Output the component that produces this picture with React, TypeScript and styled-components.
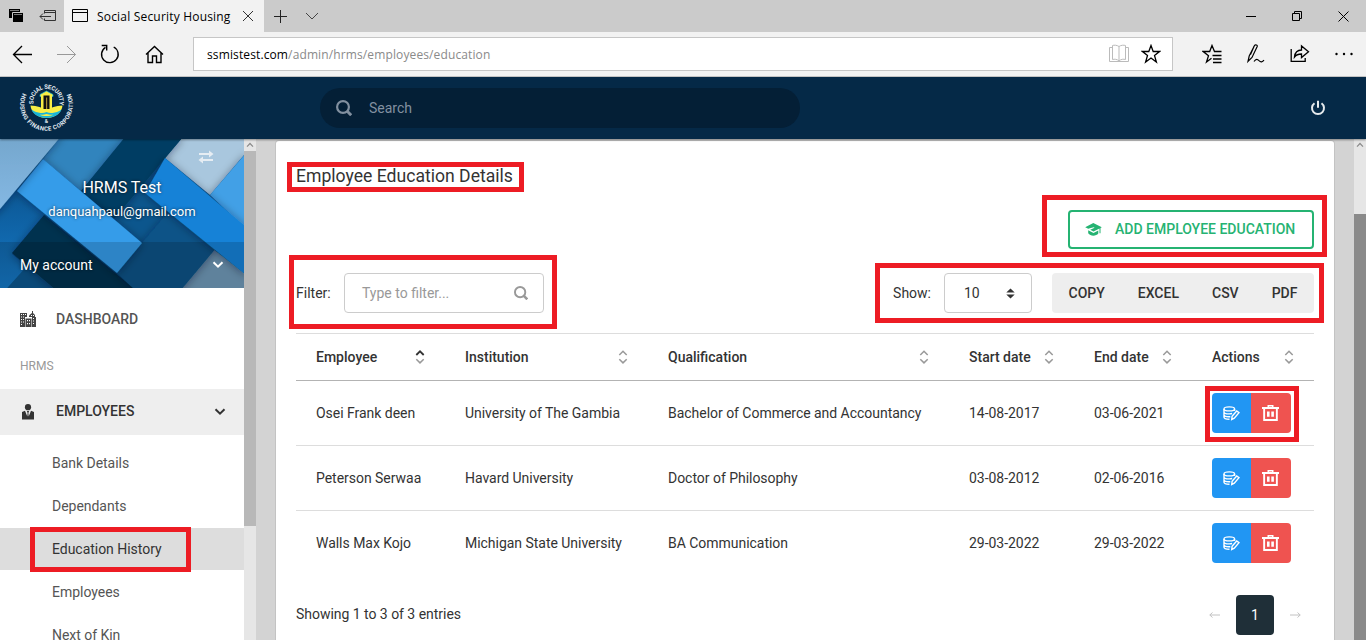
import React from 'react';
import styled, { createGlobalStyle, css } from 'styled-components';

const GlobalStyle = createGlobalStyle`
  *, *::before, *::after { box-sizing: border-box; }
  html, body { margin: 0; padding: 0; overflow: hidden; }
  body { font-family: Roboto, "Liberation Sans", sans-serif; font-size: 14px; color: #333; }
  button, input { font-family: inherit; }
  svg { display: block; flex: none; }
`;

const Window = styled.div`
  position: relative;
  width: 1366px;
  height: 640px;
  overflow: hidden;
  display: flex;
  flex-direction: column;
  background: #d3d3d3;
`;

/* ---------- Browser chrome ---------- */

const TitleBar = styled.div`
  display: flex;
  flex: none;
  height: 32px;
  background: #cbcbcb;
  color: #000;
  font-family: "Open Sans", "Noto Sans", sans-serif;
`;

const TabTools = styled.div`
  display: flex;
  align-items: center;
  gap: 15px;
  width: 64px;
  padding-left: 8px;
`;

const BrowserTab = styled.div`
  display: flex;
  align-items: center;
  width: 200px;
  padding: 0 10px 0 8px;
  background: #f2f2f2;
`;

const TabTitle = styled.span`
  flex: 1;
  margin-left: 9px;
  font-size: 12px;
  letter-spacing: 0.19px;
  white-space: nowrap;
`;

const NewTab = styled.div`
  display: flex;
  align-items: center;
  gap: 18px;
  padding-left: 10px;
`;

const WindowButtons = styled.div`
  display: flex;
  align-items: center;
  gap: 36px;
  margin-left: auto;
  padding-right: 17px;
`;

const Toolbar = styled.div`
  display: flex;
  flex: none;
  align-items: center;
  height: 45px;
  padding: 0 12px 0 12px;
  background: #f2f2f2;
  border-bottom: 1px solid #c9c9c9;
`;

const NavButtons = styled.div`
  display: flex;
  gap: 24px;
  width: 181px;
`;

const AddressBar = styled.div`
  display: flex;
  align-items: center;
  width: 980px;
  height: 34px;
  padding: 0 11px 0 13px;
  background: #fff;
  border: 1px solid #c6c6c6;
  font-family: "Open Sans", "Noto Sans", sans-serif;
  font-size: 12px;
  letter-spacing: 0.12px;
  color: #8a8a8a;
`;

const Host = styled.span`
  color: #000;
`;

const AddressTools = styled.div`
  display: flex;
  gap: 12px;
  margin-left: auto;
`;

const BrowserActions = styled.div`
  display: flex;
  gap: 24px;
  margin-left: auto;
`;

/* ---------- Application header ---------- */

const Header = styled.header`
  position: relative;
  z-index: 1;
  display: flex;
  flex: none;
  align-items: center;
  height: 62px;
  padding: 0 40px 0 19px;
  background: #052947;
  box-shadow: 0 1px 2px rgba(0, 0, 0, 0.4);
`;

const LogoSlot = styled.div`
  width: 301px;
`;

const SearchPill = styled.div`
  display: flex;
  align-items: center;
  gap: 17px;
  width: 480px;
  height: 40px;
  padding-left: 16px;
  border-radius: 20px;
  background: #041f36;
  color: #8290a0;
`;

const PowerSlot = styled.div`
  margin-left: auto;
`;

/* ---------- Body ---------- */

const Body = styled.div`
  display: flex;
  flex: 1;
  min-height: 0;
`;

const Sidebar = styled.aside`
  width: 244px;
  overflow: hidden;
  background: #fff;
`;

const Profile = styled.div`
  position: relative;
  height: 149px;
  color: #fff;
  text-shadow: 0 0 3px rgba(0, 0, 0, 0.7);
`;

const ProfileArt = styled.svg`
  position: absolute;
  inset: 0;
`;

const ProfileText = styled.div`
  position: relative;
  display: flex;
  flex-direction: column;
  align-items: center;
  height: 103px;
  padding-top: 39px;
`;

const ProfileName = styled.div`
  font-size: 16px;
  line-height: 20px;
`;

const ProfileMail = styled.div`
  margin-top: 4px;
  font-size: 13px;
  line-height: 20px;
  letter-spacing: -0.03px;
`;

const SwapSlot = styled.div`
  position: absolute;
  top: 11px;
  right: 30px;
`;

const AccountBar = styled.div`
  position: relative;
  display: flex;
  align-items: center;
  justify-content: space-between;
  height: 46px;
  padding: 0 20px;
  background: rgba(0, 0, 0, 0.15);
`;

const NavRow = styled.div<{ $active?: boolean }>`
  display: flex;
  align-items: center;
  height: 46px;
  padding: 0 18px 0 20px;
  font-weight: 500;
  line-height: 20px;
  color: ${(p) => (p.$active ? '#333' : '#555')};
  background: ${(p) => (p.$active ? '#eee' : 'transparent')};
`;

const DashboardRow = styled(NavRow)`
  margin-top: 8px;
`;

const NavLabel = styled.span<{ $raised?: boolean }>`
  flex: 1;
  margin-left: 20px;
  padding-bottom: ${(p) => (p.$raised ? 2 : 0)}px;
`;

const NavGroup = styled.div`
  height: 47px;
  padding: 16px 20px 0;
  font-size: 12px;
  line-height: 16px;
  color: #999;
`;

const SubNav = styled.div`
  display: flex;
  flex-direction: column;
  gap: 1px;
  padding-top: 7px;
`;

const SubItem = styled.div<{ $active?: boolean }>`
  height: 42px;
  flex: none;
  padding-left: 52px;
  line-height: 42px;
  letter-spacing: -0.03px;
  color: ${(p) => (p.$active ? '#333' : '#555')};
  background: ${(p) => (p.$active ? '#ddd' : 'transparent')};
`;

const ScrollTrack = styled.div`
  display: flex;
  flex-direction: column;
  width: 12px;
  background: #e6e6e6;
`;

const ScrollArrow = styled.div`
  display: flex;
  align-items: center;
  justify-content: center;
  height: 12px;
`;

const ScrollThumb = styled.div<{ $offset: number; $length: number; $tone: string }>`
  flex: none;
  height: ${(p) => p.$length}px;
  margin-top: ${(p) => p.$offset}px;
  background: ${(p) => p.$tone};
`;

const Main = styled.main`
  flex: 1;
  padding: 2px 20px 0;
  background: #d3d3d3;
`;

const Card = styled.section`
  height: 560px;
  padding: 0 20px;
  background: #fff;
  border-radius: 3px;
  box-shadow: 0 0 0 1px #c3c3c3;
`;

const CardTitle = styled.h5`
  margin: 0;
  padding-top: 23px;
  font-size: 17.6px;
  font-weight: 400;
  line-height: 25px;
`;

const CardActions = styled.div`
  display: flex;
  justify-content: flex-end;
  margin-top: 21px;
`;

const AddButton = styled.button`
  display: flex;
  align-items: center;
  gap: 13px;
  height: 39px;
  width: 246px;
  padding: 0 15px 1px;
  border: 2px solid #25b372;
  border-radius: 4px;
  background: #fff;
  color: #25b372;
  font-size: 14px;
  font-weight: 500;
  line-height: 20px;
  white-space: nowrap;
`;

const TableTools = styled.div`
  display: flex;
  align-items: center;
  height: 40px;
  margin: 24px 0 20px;
`;

const fieldBox = css`
  display: flex;
  align-items: center;
  justify-content: space-between;
  height: 40px;
  border: 1px solid #ccc;
  border-radius: 4px;
`;

const FilterLabel = styled.span`
  width: 48px;
`;

const FilterBox = styled.div`
  ${fieldBox}
  width: 200px;
  padding: 0 15px 0 17px;
  color: #999;
`;

const ShowGroup = styled.div`
  display: flex;
  align-items: center;
  margin-left: auto;
`;

const PageSize = styled.div`
  ${fieldBox}
  width: 88px;
  margin: 0 20px 0 13px;
  padding: 0 16px 0 19px;
`;

const ExportGroup = styled.div`
  display: flex;
  align-items: center;
  justify-content: space-between;
  width: 262px;
  height: 40px;
  padding: 0 16.5px 0 16.5px;
  border-radius: 4px;
  background: #eee;
  font-weight: 500;
`;

const Table = styled.table`
  width: 1018px;
  table-layout: fixed;
  border-spacing: 0;
`;

const HeadCell = styled.th`
  height: 48px;
  padding: 0 20px;
  border-top: 1px solid #ddd;
  border-bottom: 1px solid #b3b3b3;
  font-weight: 500;
  text-align: left;
`;

const HeadInner = styled.div`
  display: flex;
  align-items: center;
  justify-content: space-between;
`;

const Cell = styled.td<{ $last?: boolean }>`
  height: 65px;
  padding: 0 0 0 20px;
  border-bottom: 1px solid ${(p) => (p.$last ? 'transparent' : '#ddd')};
  letter-spacing: -0.03px;
  white-space: nowrap;
`;

const ButtonPair = styled.div`
  display: flex;
  width: 79px;
  height: 40px;
  overflow: hidden;
  border-radius: 4px;
`;

const RowButton = styled.button<{ $tone: string; $width: number }>`
  display: flex;
  align-items: center;
  justify-content: center;
  width: ${(p) => p.$width}px;
  padding: 0 1px 0 0;
  border: 0;
  background: ${(p) => p.$tone};
  color: #fff;
`;

const TableFooter = styled.div`
  display: flex;
  align-items: center;
  justify-content: space-between;
  height: 40px;
  margin-top: 19px;
`;

const EntryCount = styled.span`
  padding-bottom: 2px;
  letter-spacing: -0.03px;
`;

const Pager = styled.div`
  display: flex;
  align-items: center;
  gap: 16px;
  padding-right: 13px;
  color: #c2c2c2;
`;

const CurrentPage = styled.div`
  width: 38px;
  height: 40px;
  border-radius: 4px;
  background: #1f2f38;
  color: #fff;
  line-height: 40px;
  text-align: center;
`;

/* Red call-out frames lying over the page. */
const Callout = styled.div<{ $x: number; $y: number; $w: number; $h: number }>`
  position: absolute;
  z-index: 2;
  left: ${(p) => p.$x}px;
  top: ${(p) => p.$y}px;
  width: ${(p) => p.$w}px;
  height: ${(p) => p.$h}px;
  border: 5px solid #ed1c24;
  pointer-events: none;
`;

/* ---------- Icons ---------- */

type IconProps = {
  w?: number;
  h?: number;
  box?: string;
  color?: string;
  stroke?: number;
  children: React.ReactNode;
};

const Line = ({ w = 16, h = 16, box, color = 'currentColor', stroke = 1, children }: IconProps) => (
  <svg width={w} height={h} viewBox={box ?? `0 0 ${w} ${h}`} fill="none" stroke={color} strokeWidth={stroke}>
    {children}
  </svg>
);

const Chevron = ({ color }: { color: string }) => (
  <Line w={12} h={8} color={color} stroke={2}>
    <path d="M1.5 1.2 6 5.7l4.5-4.5" />
  </Line>
);

const Magnifier = ({ size }: { size: number }) => (
  <Line w={size} h={size} box="0 0 16 16" stroke={2.2}>
    <circle cx="7" cy="7" r="5.9" />
    <path d="m11 11 4.2 4.2" strokeWidth={3} />
  </Line>
);

const SortIcon = ({ asc }: { asc?: boolean }) => (
  <Line w={10} h={14} color="#999" stroke={1.5}>
    <path d="M1.3 5 5 1.3 8.7 5" stroke={asc ? '#333' : '#999'} strokeWidth={asc ? 1.8 : 1.5} />
    <path d="M1.3 9.2 5 12.9l3.7-3.7" />
  </Line>
);

const EditIcon = () => (
  <Line w={17} h={16} stroke={1.4}>
    <ellipse cx="6.3" cy="3.9" rx="5.3" ry="2" />
    <path d="M1 3.9v8.3c0 1 2.200 1.900 5.500 2M11.600 3.900v2M1 6.900c0 1.100 2.300 2 5.300 2 1.200 0 2-.1 2.800-.4M1 9.700c0 1.100 2.300 2 4.800 2h1.500" />
    <path d="m8.700 14.500.4-3.200 4.600-5.300 2.300 1.700-4.700 5.500z" />
  </Line>
);

const TrashIcon = () => (
  <svg width="17" height="16" viewBox="0 0 17 16" fill="currentColor">
    <path
      fillRule="evenodd"
      d="M5.500 2V0h6v2H17v2h-1.200v12H1.200V4H0V2zm1.500 0h3V1.400H7zM3.100 4v10.100h10.800V4z"
    />
    <path d="M5 6.500h2.600v5.200H5zM9.300 6.500h2.600v5.200H9.300z" />
  </svg>
);

const CapIcon = () => (
  <svg width="17" height="13" viewBox="0 0 17 13" fill="currentColor">
    <path d="M8.300 0 .2 4.200l3 1.500 5.400-1.500 1 .5-4.400 2.100 3.300 1.700 6-3v4.800h1V5l1.300-.8z" />
    <path d="M3.200 7.300v3c1.200 1.600 3 2.400 5.100 2.400s3.900-.8 5-2.200V7.400L8.500 9.900z" />
  </svg>
);

const BuildingIcon = () => (
  <svg width="16" height="16" viewBox="0 0 16 16" fill="#444">
    <path d="M0 2h7v4H5v10H0zM12 0h1v2l2 2v2h1v10h-4V6H9V5l1-1.500L12 2z" />
    <path d="M5 6h7v10H5z" fill="#fff" />
    <path fillRule="evenodd" d="M5.500 7.500h6V16h-6zM7 9v1.200h1V9zm2 0v1.200h1V9zM7 12v1.200h1V12zm2 0v1.200h1V12z" />
    <path
      fill="#fff"
      d="M1 3h1v1H1zM3 3h1v1H3zM5 3h1v1H5zM1 5.500h1v1H1zM3 5.500h1v1H3zM1 8h1v1H1zM3 8h1v1H3zM1 10.500h1v1H1zM3 10.500h1v1H3zM1 13h1v1H1zM11 4h1v1h-1zM13 4h1v1h-1zM13 7h1v1h-1zM13 9.500h1v1h-1zM13 12h1v1h-1z"
    />
  </svg>
);

const PersonIcon = () => (
  <svg width="16" height="16" viewBox="0 0 16 16" fill="#333">
    <circle cx="8" cy="3.2" r="3.1" />
    <path d="M2 8 5 6.800l2.300 5.700.3-3.500-.7-2h2.200l-.7 2 .3 3.500L11 6.800 14 8v7.500H2z" />
  </svg>
);

const Logo = () => (
  <svg width="56" height="54" viewBox="0 0 56 54">
    <defs>
      <path id="inner-ring" d="M14.700 23A13 13 0 1 1 40.300 23" />
      <path id="outer-ring" d="M3.700 12A26.400 26.400 0 1 0 51.300 12" />
    </defs>
    <g fill="#e3ebf2" fontFamily="Roboto, sans-serif" fontWeight="700" fontSize="6">
      <text>
        <textPath href="#inner-ring" textLength="46">
          SOCIAL SECURITY
        </textPath>
      </text>
      <text>
        <textPath href="#outer-ring" textLength="106">
          HOUSING FINANCE CORPORATION
        </textPath>
      </text>
      <text x="27.500" y="42" fontSize="5" textAnchor="middle">
        &amp;
      </text>
    </g>
    <path d="M11.500 24.500c.5 6.500 7 12.500 16 12.500s15.500-6 16-12.500c-7 .2-11.500 2-16 5.500-4.500-3.500-9-5.300-16-5.500z" fill="#f8ee45" />
    <path d="M12.500 28.500c1.500 4.500 7.500 8.500 15 8.500s13.500-4 15-8.500c-3 2.500-6 3-9 3.500-2 .3-4 0-6-1-2 1-4 1.300-6 1-3-.5-6-1-9-3.500z" fill="#19b5d8" />
    <path d="M20.500 33.500c3 1 5-.5 7-.5s4 1.500 7 .500c-2.500 2-11.500 2-14 0z" fill="#f8ee45" />
    <path d="M21 13.500 27.500 10l6.500 3.500v2H21z" fill="#f8ee45" stroke="#19b5d8" strokeWidth=".7" />
    <path d="M22 15h11v13l-2 2h-7l-2-2z" fill="#f8ee45" />
    <path d="M24.500 14.500h6V28h-6z" fill="#111" />
    <path d="M27 16.500h1.200V28H27z" fill="#a58d35" />
  </svg>
);

const GeometricArt = () => (
  <ProfileArt width="244" height="149" viewBox="0 0 244 149">
    <defs>
      <filter id="lift" x="-30%" y="-30%" width="160%" height="160%">
        <feDropShadow dx="0" dy="1" stdDeviation="4" floodColor="#001428" floodOpacity="0.42" />
      </filter>
      <linearGradient id="pale" x1="0" y1="0" x2="0" y2="1">
        <stop offset="0" stopColor="#74a6cc" />
        <stop offset="1" stopColor="#86bae6" />
      </linearGradient>
      <linearGradient id="azure" x1="0" y1="0" x2="0" y2="1">
        <stop offset="0" stopColor="#0b5591" />
        <stop offset="1" stopColor="#167bc9" />
      </linearGradient>
    </defs>
    <rect width="244" height="149" fill="#0c568d" />
    <path d="M59 0h66L81 52 43 20z" fill="#3184bd" />
    <path d="M181 0h63v16l-34 40-45-37z" fill="#a9c7de" />
    <path d="M0 60 17 45l30 28-35 42 15 12-27 30z" fill="url(#azure)" />
    <g filter="url(#lift)">
      <path d="M125-2h58l-69 82-33-28z" fill="#063d64" />
    </g>
    <g filter="url(#lift)">
      <path d="m44 76-32 38 44 37h80z" fill="#06304f" />
    </g>
    <g filter="url(#lift)">
      <path d="M246 14v76l-36-34z" fill="#43a0e6" />
      <path d="M213 110 181 149h63v-15z" fill="#6f99b8" />
    </g>
    <g filter="url(#lift)">
      <path d="m142 104 34-40 41 44-36 43h-46l-18-17z" fill="#0a5287" />
    </g>
    <g filter="url(#lift)">
      <path d="m165 19 81 69v48L145 54z" fill="#1482d7" />
    </g>
    <g filter="url(#lift)">
      <path d="m43 20 99 84-25 30L17 52z" fill="#349ce9" />
    </g>
    <g filter="url(#lift)">
      <path d="M-10-5h73L0 70l-10 9z" fill="url(#pale)" />
    </g>
  </ProfileArt>
);

const UpArrow = () => (
  <Line w={8} h={6} color="#8c8c8c" stroke={1.2}>
    <path d="M1 4.700 4 1.500l3 3.200" />
  </Line>
);

/* ---------- Data ---------- */

const columns = [
  { label: 'Employee', width: 149 },
  { label: 'Institution', width: 203 },
  { label: 'Qualification', width: 301 },
  { label: 'Start date', width: 125 },
  { label: 'End date', width: 118 },
  { label: 'Actions', width: 122 },
];

const rows = [
  ['Osei Frank deen', 'University of The Gambia', 'Bachelor of Commerce and Accountancy', '14-08-2017', '03-06-2021'],
  ['Peterson Serwaa', 'Havard University', 'Doctor of Philosophy', '03-08-2012', '02-06-2016'],
  ['Walls Max Kojo', 'Michigan State University', 'BA Communication', '29-03-2022', '29-03-2022'],
];

const subItems = ['Bank Details', 'Dependants', 'Education History', 'Employees', 'Next of Kin'];

/* ---------- Sections ---------- */

const BrowserChrome = () => (
  <>
    <TitleBar>
      <TabTools>
        <svg width="16" height="16" viewBox="0 0 16 16">
          <path d="M1 1h11v9H1z" />
          <path d="M4.500 4.500h10v8h-10z" stroke="#cbcbcb" strokeWidth="1" />
          <path d="M5 5h10v9H5z" />
          <path d="M2 2.500h9M6 6.500h8" stroke="#cbcbcb" strokeWidth=".6" />
        </svg>
        <Line w={17} h={14} color="#333">
          <path d="M5.500 4.500v-3h11v10h-11v-2M5.500 3.500h11M1 7.500h11M4 4.500l-3 3 3 3" />
        </Line>
      </TabTools>
      <BrowserTab>
        <Line w={16} h={14}>
          <path d="M.5.500h15v12H.5zM.5 3.500h15" />
        </Line>
        <TabTitle>Social Security Housing</TabTitle>
        <Line w={12} h={12} color="#333">
          <path d="m1 1 10 10M11 1 1 11" />
        </Line>
      </BrowserTab>
      <NewTab>
        <Line w={13} h={13} color="#222">
          <path d="M6.500 0v13M0 6.500h13" />
        </Line>
        <Line w={14} h={8} color="#444">
          <path d="m1 1 6 6 6-6" />
        </Line>
      </NewTab>
      <WindowButtons>
        <Line w={10} h={10}>
          <path d="M0 5.500h10" />
        </Line>
        <Line w={10} h={10}>
          <path d="M.5 2.500h7v7h-7zM2.500 2.500v-2h7v7h-2" />
        </Line>
        <Line w={11} h={11}>
          <path d="m.5.500 10 10M10.500.500l-10 10" />
        </Line>
      </WindowButtons>
    </TitleBar>
    <Toolbar>
      <NavButtons>
        <Line w={20} h={20} color="#000" stroke={1.3}>
          <path d="M1.500 10.500H20M10 2l-8.500 8.500L10 19" />
        </Line>
        <Line w={20} h={20} color="#999">
          <path d="M1 10.500h18.500M11 2l8.500 8.500L11 19" />
        </Line>
        <Line w={20} h={20} color="#000" stroke={1.4}>
          <path d="M13.700 3A8.300 8.300 0 1 1 5.500 3.300M1.700 1.500h5v5" />
        </Line>
        <Line w={20} h={20} color="#000" stroke={1.4}>
          <path d="m2 10.500 8.500-8 8.500 8M4 9v9.500h4.500V12h4v6.500H17V9" />
        </Line>
      </NavButtons>
      <AddressBar>
        <Host>ssmistest.com</Host>
        <span>/admin/hrms/employees/education</span>
        <AddressTools>
          <Line w={20} h={20} color="#bbb">
            <path d="M10 2.500C8 1 5 1 3.500 1.500v14c2-.500 4.500-.500 6.500 1.500 2-2 4.500-2 6.500-1.500v-14C15 1 12 1 10 2.500V17M3.500 3.500h-3v14h19v-14h-3" />
          </Line>
          <Line w={20} h={20} color="#000" stroke={1.3}>
            <path d="m10 1.500 2.200 6h6.300l-5 4 1.900 6.500-5.400-4-5.400 4 1.900-6.500-5-4h6.300z" />
          </Line>
        </AddressTools>
      </AddressBar>
      <BrowserActions>
        <Line w={20} h={20} color="#000" stroke={1.3}>
          <path d="M19.500 7.500h-7l-2.500-6-2.300 6H1.200l5.300 4.200-2 6.300 5-3.700M10.500 11.500h9M11 15h8.500M11 18.500h8.500" />
        </Line>
        <Line w={20} h={20} color="#000" stroke={1.2}>
          <path d="M2 17.500 3.200 12 8.500 1.500c.8-1.300 3.300-.5 2.700 1L6 13.500zM8 2.500l-3.500 8M8 17.500c2-3 3.500-2.500 5-.8 1.700 1.800 3.500 1.300 5-.5" />
        </Line>
        <Line w={20} h={20} color="#000" stroke={1.3}>
          <path d="M1.200 5v12.300h14V14M4.500 13c.5-4.500 3-7 7-7V2l7 5.800-7 5.800V10c-3 0-5.500 1-7 3z" />
        </Line>
        <svg width="20" height="20" viewBox="0 0 20 20">
          <circle cx="2.500" cy="10" r="1.200" />
          <circle cx="10" cy="10" r="1.200" />
          <circle cx="17.500" cy="10" r="1.200" />
        </svg>
      </BrowserActions>
    </Toolbar>
  </>
);

const SideNav = () => (
  <Sidebar>
    <Profile>
      <GeometricArt />
      <ProfileText>
        <ProfileName>HRMS Test</ProfileName>
        <ProfileMail>danquahpaul@gmail.com</ProfileMail>
      </ProfileText>
      <SwapSlot>
        <svg width="16" height="14" viewBox="0 0 16 14" fill="#e6edf3">
          <path d="M1 3h10V.5L15.500 4 11 7.500V5H1zM15 9H5V6.500L.5 10 5 13.500V11h10z" />
        </svg>
      </SwapSlot>
      <AccountBar>
        <span>My account</span>
        <Chevron color="#fff" />
      </AccountBar>
    </Profile>
    <DashboardRow>
      <BuildingIcon />
      <NavLabel>DASHBOARD</NavLabel>
    </DashboardRow>
    <NavGroup>HRMS</NavGroup>
    <NavRow $active>
      <PersonIcon />
      <NavLabel $raised>EMPLOYEES</NavLabel>
      <Chevron color="#333" />
    </NavRow>
    <SubNav>
      {subItems.map((item) => (
        <SubItem key={item} $active={item === 'Education History'}>
          {item}
        </SubItem>
      ))}
    </SubNav>
  </Sidebar>
);

const EducationCard = () => (
  <Card>
    <CardTitle>Employee Education Details</CardTitle>
    <CardActions>
      <AddButton>
        <CapIcon />
        ADD EMPLOYEE EDUCATION
      </AddButton>
    </CardActions>
    <TableTools>
      <FilterLabel>Filter:</FilterLabel>
      <FilterBox>
        Type to filter...
        <Magnifier size={14} />
      </FilterBox>
      <ShowGroup>
        <span>Show:</span>
        <PageSize>
          10
          <svg width="9" height="11" viewBox="0 0 9 11" fill="#333">
            <path d="M.3 4.500 4.500.500l4.200 4zM.3 6.500h8.400l-4.200 4z" />
          </svg>
        </PageSize>
        <ExportGroup>
          <span>COPY</span>
          <span>EXCEL</span>
          <span>CSV</span>
          <span>PDF</span>
        </ExportGroup>
      </ShowGroup>
    </TableTools>
    <Table>
      <colgroup>
        {columns.map((c) => (
          <col key={c.label} width={c.width} />
        ))}
      </colgroup>
      <thead>
        <tr>
          {columns.map((c, i) => (
            <HeadCell key={c.label}>
              <HeadInner>
                {c.label}
                <SortIcon asc={i === 0} />
              </HeadInner>
            </HeadCell>
          ))}
        </tr>
      </thead>
      <tbody>
        {rows.map((row, r) => (
          <tr key={row[0]}>
            {row.map((value, c) => (
              <Cell key={c} $last={r === rows.length - 1}>
                {value}
              </Cell>
            ))}
            <Cell $last={r === rows.length - 1}>
              <ButtonPair>
                <RowButton $tone="#2196f3" $width={39} aria-label="Edit">
                  <EditIcon />
                </RowButton>
                <RowButton $tone="#ef5350" $width={40} aria-label="Delete">
                  <TrashIcon />
                </RowButton>
              </ButtonPair>
            </Cell>
          </tr>
        ))}
      </tbody>
    </Table>
    <TableFooter>
      <EntryCount>Showing 1 to 3 of 3 entries</EntryCount>
      <Pager>
        <Line w={11} h={6}>
          <path d="M.8 3H11M3.500.5.800 3l2.700 2.500" />
        </Line>
        <CurrentPage>1</CurrentPage>
        <Line w={11} h={6}>
          <path d="M0 3h10.200M7.500.5 10.200 3 7.500 5.500" />
        </Line>
      </Pager>
    </TableFooter>
  </Card>
);

export default function App() {
  return (
    <Window>
      <GlobalStyle />
      <BrowserChrome />
      <Header>
        <LogoSlot>
          <Logo />
        </LogoSlot>
        <SearchPill>
          <Magnifier size={16} />
          Search
        </SearchPill>
        <PowerSlot>
          <Line w={16} h={16} color="#e6eaed" stroke={2}>
            <path d="M4.500 3.200a6 6 0 1 0 7 0M8 .800v7" />
          </Line>
        </PowerSlot>
      </Header>
      <Body>
        <SideNav />
        <ScrollTrack>
          <ScrollArrow>
            <UpArrow />
          </ScrollArrow>
          <ScrollThumb $offset={0} $length={375} $tone="#b8b8b8" />
        </ScrollTrack>
        <Main>
          <EducationCard />
        </Main>
        <ScrollTrack>
          <ScrollArrow>
            <UpArrow />
          </ScrollArrow>
          <ScrollThumb $offset={63} $length={426} $tone="#8a8a8a" />
        </ScrollTrack>
      </Body>
      <Callout $x={287} $y={162} $w={237} $h={30} />
      <Callout $x={1042} $y={195} $w={285} $h={62} />
      <Callout $x={289} $y={255} $w={268} $h={74} />
      <Callout $x={875} $y={263} $w={449} $h={60} />
      <Callout $x={1205} $y={386} $w={94} $h={56} />
      <Callout $x={30} $y={527} $w={161} $h={45} />
    </Window>
  );
}
